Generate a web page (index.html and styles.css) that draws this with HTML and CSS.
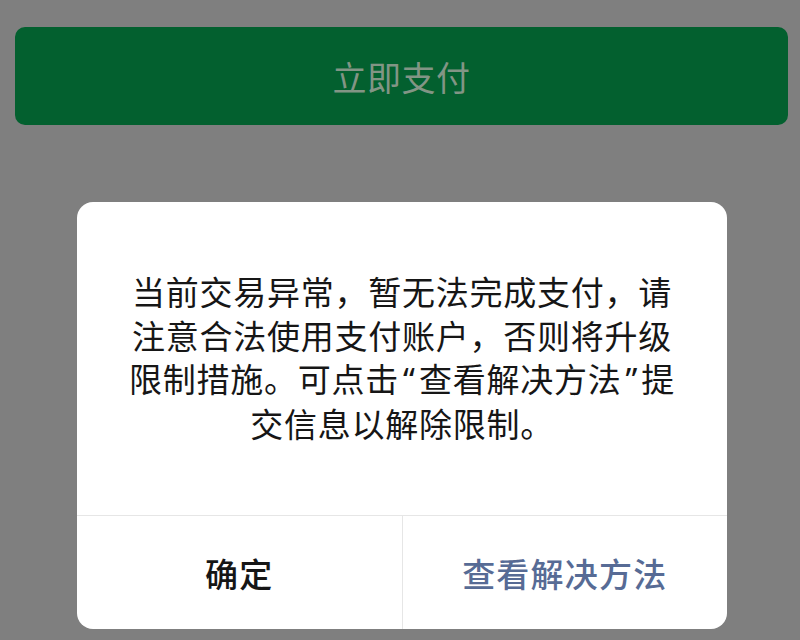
FILE: index.html
```html
<!DOCTYPE html>
<html lang="zh-CN">
<head>
<meta charset="utf-8">
<title>支付</title>
<link rel="stylesheet" href="styles.css">
</head>
<body>
<div class="page">
  <div class="pay-btn">立即支付</div>
  <div class="dialog">
    <div class="dialog-body">当前交易异常，暂无法完成支付，请<br>注意合法使用支付账户，否则将升级<br>限制措施。可点击<span class="q">“</span>查看解决方法<span class="q">”</span>提<br>交信息以解除限制。</div>
    <div class="dialog-footer">
      <div class="action action-ok">确定</div>
      <div class="action action-link">查看解决方法</div>
    </div>
  </div>
</div>
</body>
</html>
```
FILE: styles.css
```css
html, body {
  margin: 0;
  padding: 0;
  background: #7f7f7f;
  width: 800px;
  height: 640px;
  overflow: hidden;
  font-family: "Noto Sans CJK SC", "Noto Sans", sans-serif;
}
.page {
  padding: 27px 12px 0 15px;
  display: flex;
  flex-direction: column;
}
.pay-btn {
  height: 98px;
  border-radius: 10px;
  background: #03602f;
  color: #829585;
  font-size: 34px;
  display: flex;
  align-items: center;
  justify-content: center;
  letter-spacing: 0.5px;
}
.dialog {
  margin-top: 77px;
  margin-left: 62px;
  width: 650px;
  height: 427px;
  background: #ffffff;
  border-radius: 16px;
  display: flex;
  flex-direction: column;
  overflow: hidden;
}
.dialog-body {
  flex: none;
  padding: 68px 0 0;
  height: 314px;
  box-sizing: border-box;
  text-align: center;
  font-size: 33px;
  line-height: 43.7px;
  letter-spacing: 0.75px;
  color: #161616;
  border-bottom: 1px solid #e6e6e6;
}
.q {
  font-family: "Noto Sans", "Liberation Sans", sans-serif;
  letter-spacing: 0;
  padding: 0 4px;
}
.dialog-footer {
  flex: 1;
  display: flex;
}
.action {
  flex: 1;
  display: flex;
  align-items: center;
  justify-content: center;
  font-size: 33px;
  font-weight: 500;
  letter-spacing: 1.2px;
}
.action-ok {
  color: #161616;
  border-right: 1px solid #e6e6e6;
}
.action-link {
  color: #576b95;
}
```
